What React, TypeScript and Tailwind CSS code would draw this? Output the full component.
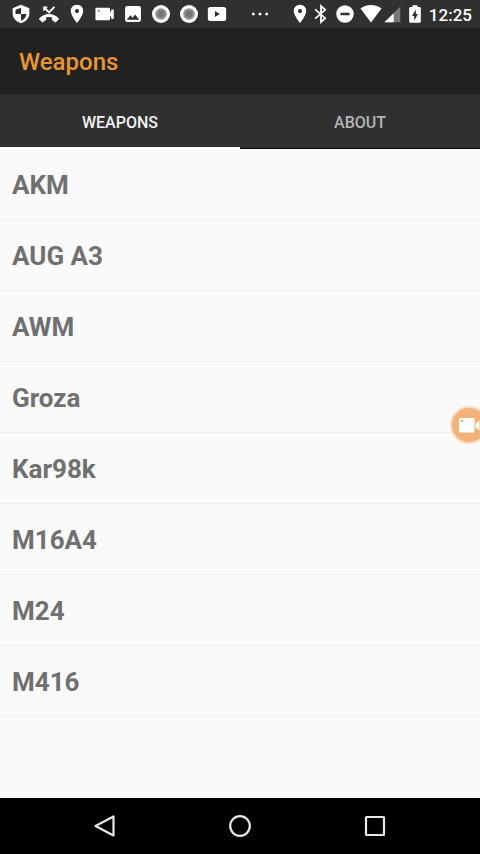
import { useState } from "react";
import type { ReactNode } from "react";

const weapons = ["AKM", "AUG A3", "AWM", "Groza", "Kar98k", "M16A4", "M24", "M416"];

function Glyph({ children, className = "size-5" }: { children: ReactNode; className?: string }) {
  return (
    <svg viewBox="0 0 24 24" fill="currentColor" aria-hidden="true" className={`shrink-0 ${className}`}>
      {children}
    </svg>
  );
}

function Pin() {
  return (
    <Glyph>
      <path d="M12 1C7.700 1 4.500 4.400 4.500 8.500 4.500 14 12 23 12 23S19.500 14 19.500 8.500C19.500 4.400 16.300 1 12 1zm0 10a2.500 2.500 0 1 1 0-5 2.500 2.500 0 0 1 0 5z" />
    </Glyph>
  );
}

function Disc() {
  return (
    <Glyph>
      <circle cx="12" cy="12" r="10.800" />
      <circle cx="12" cy="12" r="7" fill="#8f8f8f" />
      <circle cx="12" cy="12" r="4" fill="#747474" />
    </Glyph>
  );
}

function StatusBar() {
  return (
    <div className="flex h-7 items-center bg-[#303030] pl-[11px] pr-2 text-white">
      <div className="flex gap-2">
        <Glyph>
          <path d="M12 1 2 5v6.500c0 5.300 4.200 10 10 11.500 5.800-1.500 10-6.200 10-11.500V5z" />
          <path d="M12 4.500V12h6.600c-.5 3.800-3.100 7-6.600 8V12H5.400V7z" fill="#303030" />
        </Glyph>
        <Glyph>
          <path d="M6.500 4.500 12 10l6.500-6.500" fill="none" stroke="currentColor" strokeWidth="2.200" />
          <path d="M5 3h5v2H7v3H5z" />
          <path d="M23.500 17C20.700 14.300 16.500 12 12 12S3.300 14.300.5 17c-.6.500-.6 1.200 0 1.700l3 3c.5.500 1 .5 1.500 0l3-2.300c.4-.3.600-.6.600-1v-2.500a14 14 0 0 1 6.800 0v2.500c0 .4.200.7.600 1l3 2.300c.5.500 1 .5 1.500 0l3-3c.5-.5.500-1.200 0-1.700z" />
        </Glyph>
        <Pin />
        <Glyph>
          <path d="M2 4.500h14.500a1.500 1.500 0 0 1 1.500 1.500v4l1.500-1.500V6.500h3v11.500h-3v-2.500L18 14v4a1.500 1.500 0 0 1-1.500 1.500H2A1.500 1.500 0 0 1 .5 18V6A1.500 1.500 0 0 1 2 4.500z" />
          <circle cx="4.500" cy="8" r="1.200" fill="#777777" />
        </Glyph>
        <Glyph>
          <path d="M21.500 19V5c0-1.400-1.100-2.500-2.500-2.500H5A2.500 2.500 0 0 0 2.500 5v14c0 1.400 1.100 2.500 2.500 2.500h14c1.400 0 2.500-1.100 2.500-2.500zM9 13.500l2.500 3 3-4 5 6.500h-15z" />
        </Glyph>
        <Disc />
        <Disc />
        <Glyph>
          <path d="M4 3.500h16A3 3 0 0 1 23 6.500v11a3 3 0 0 1-3 3H4a3 3 0 0 1-3-3v-11a3 3 0 0 1 3-3zm5.500 5v7l6-3.500z" />
        </Glyph>
      </div>
      <Glyph className="ml-[23px] size-5">
        <circle cx="4" cy="12" r="1.800" />
        <circle cx="12" cy="12" r="1.800" />
        <circle cx="20" cy="12" r="1.800" />
      </Glyph>
      <div className="ml-auto flex items-center">
        <Pin />
        <Glyph className="ml-px size-5">
          <path d="M5 6.500 17 17l-5 4.500v-19L17 7 5 17.500" fill="none" stroke="currentColor" strokeWidth="2.100" />
        </Glyph>
        <Glyph className="ml-1 size-5">
          <path d="M12 1.500a10.500 10.500 0 1 0 0 21 10.500 10.500 0 0 0 0-21zm5.500 12h-11v-3h11z" />
        </Glyph>
        <Glyph className="ml-1 size-6">
          <path d="M12 20.500 1.500 6.500C4.200 4.300 7.800 3 12 3s7.800 1.300 10.500 3.500z" />
        </Glyph>
        <Glyph className="-ml-px size-5">
          <path d="M22 3v19H3z" fill="#777777" />
          <path d="M14 11v11H3z" />
        </Glyph>
        <Glyph className="ml-[3px] size-5">
          <path d="M17.500 3.500H15V1.500H9v2H6.500C5.700 3.500 5 4.200 5 5v16c0 .8.700 1.500 1.500 1.500h11c.8 0 1.500-.7 1.500-1.500V5c0-.8-.7-1.500-1.500-1.500zM11 20v-5.500H8.500L13 6.500V12h2.500z" />
        </Glyph>
        <span className="ml-1 pt-0.5 text-[17px] font-medium leading-5">12:25</span>
      </div>
    </div>
  );
}

export default function App() {
  const [tab, setTab] = useState(0);
  const tabClass = "flex-1 text-base font-medium";

  return (
    <div className="relative flex min-h-screen flex-col overflow-hidden bg-[#fafafa] font-['Roboto',sans-serif]">
      <StatusBar />
      <header className="flex h-[66px] items-center bg-[#212121] px-[19px] pt-0.5">
        <h1 className="text-2xl font-medium text-[#e99632]">Weapons</h1>
      </header>
      <div role="tablist" className="flex h-[55px] border-t border-[#292929] bg-[#303030]">
        <button
          role="tab"
          aria-selected={tab === 0}
          onClick={() => setTab(0)}
          className={`${tabClass} ${tab === 0 ? "border-b-2 border-white pt-[3px] text-[#f2f2f2]" : "border-b border-black pt-0.5 text-[#b5b5b5]"}`}
        >
          WEAPONS
        </button>
        <button
          role="tab"
          aria-selected={tab === 1}
          onClick={() => setTab(1)}
          className={`${tabClass} ${tab === 1 ? "border-b-2 border-white pt-[3px] text-[#f2f2f2]" : "border-b border-black pt-0.5 text-[#b5b5b5]"}`}
        >
          ABOUT
        </button>
      </div>
      <main className="flex-1">
        <ul>
          {weapons.map((name) => (
            <li key={name} className="flex h-[71px] items-center border-b border-[#ededed] px-3 pt-0.5 text-[26px] font-bold text-[#707070]">
              {name}
            </li>
          ))}
        </ul>
      </main>
      <button
        aria-label="Record screen"
        className="absolute -right-2 top-[406px] flex size-[38px] items-center justify-center rounded-full border-2 border-[#f9dcc1] bg-[#f2b27a] text-white"
      >
        <Glyph className="size-6 shrink-0">
          <path d="M3.500 5H16a1.500 1.500 0 0 1 1.500 1.500v11.500a1.500 1.500 0 0 1-1.500 1.500H3.500A1.500 1.500 0 0 1 2 18V6.500A1.500 1.500 0 0 1 3.500 5z" />
          <path d="m18.500 10.500 4-3v10l-4-3z" />
          <circle cx="5" cy="8" r="1.200" fill="#dfb077" />
        </Glyph>
      </button>
      <nav className="flex h-14 items-center justify-center gap-[111px] bg-black text-[#e8e8e8]">
        <button aria-label="Back">
          <Glyph className="size-6">
            <path d="M20.500 2.500v19L2.500 12z" fill="none" stroke="currentColor" strokeWidth="2.200" strokeLinejoin="round" />
          </Glyph>
        </button>
        <button aria-label="Home">
          <Glyph className="size-6">
            <circle cx="12" cy="12" r="9.800" fill="none" stroke="currentColor" strokeWidth="2.200" />
          </Glyph>
        </button>
        <button aria-label="Recent apps">
          <Glyph className="size-6">
            <rect x="3" y="3" width="18" height="18" rx=".5" fill="none" stroke="currentColor" strokeWidth="2.200" />
          </Glyph>
        </button>
      </nav>
    </div>
  );
}
